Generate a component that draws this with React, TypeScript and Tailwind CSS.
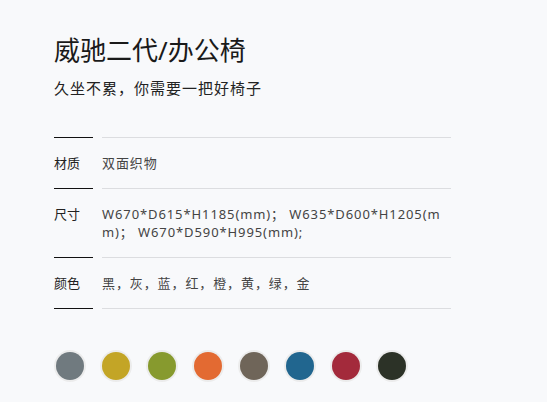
const specs = [
  { label: '材质', value: '双面织物' },
  { label: '尺寸', value: 'W670*D615*H1185(mm)； W635*D600*H1205(mm)； W670*D590*H995(mm);' },
  { label: '颜色', value: '黑，灰，蓝，红，橙，黄，绿，金' },
]

const swatches = ['#707a7f', '#c3a526', '#879a2e', '#e36a32', '#6f6559', '#21668f', '#a32a3b', '#2c3227']

export default function App() {
  return (
    <div
      className="w-[547px] h-[402px] bg-[#f8f9fb] pl-[54px] pt-[32px] text-[#222]"
      style={{ fontFamily: '"Noto Sans", "Noto Sans CJK SC", sans-serif' }}
    >
      <h1 className="text-[26px] leading-[36px] font-normal text-[#1a1a1a]">威驰二代/办公椅</h1>
      <p className="mt-[9px] text-[15px] leading-[22px] tracking-[1px] text-[#222]">久坐不累，你需要一把好椅子</p>

      <div className="mt-[38px] w-[397px]">
        {specs.map(s => (
          <div key={s.label} className="flex gap-[9px]">
            <div className="w-[39px] border-t border-[#111] py-[16px] text-[13px] leading-[18px] text-[#222]">
              {s.label}
            </div>
            <div className="flex-1 border-t border-[#dcdde0] py-[16px] text-[13px] leading-[18px] tracking-[0.9px] text-[#444] break-all">
              {s.value}
            </div>
          </div>
        ))}
        <div className="flex gap-[9px]">
          <div className="w-[39px] border-t border-[#111]" />
          <div className="flex-1 border-t border-[#dcdde0]" />
        </div>
      </div>

      <div className="mt-[41px] flex gap-[14px]">
        {swatches.map(c => (
          <div key={c} className="w-[32px] h-[32px] rounded-full bg-[#ececec] p-[2px]">
            <div className="w-full h-full rounded-full" style={{ backgroundColor: c }} />
          </div>
        ))}
      </div>
    </div>
  )
}
